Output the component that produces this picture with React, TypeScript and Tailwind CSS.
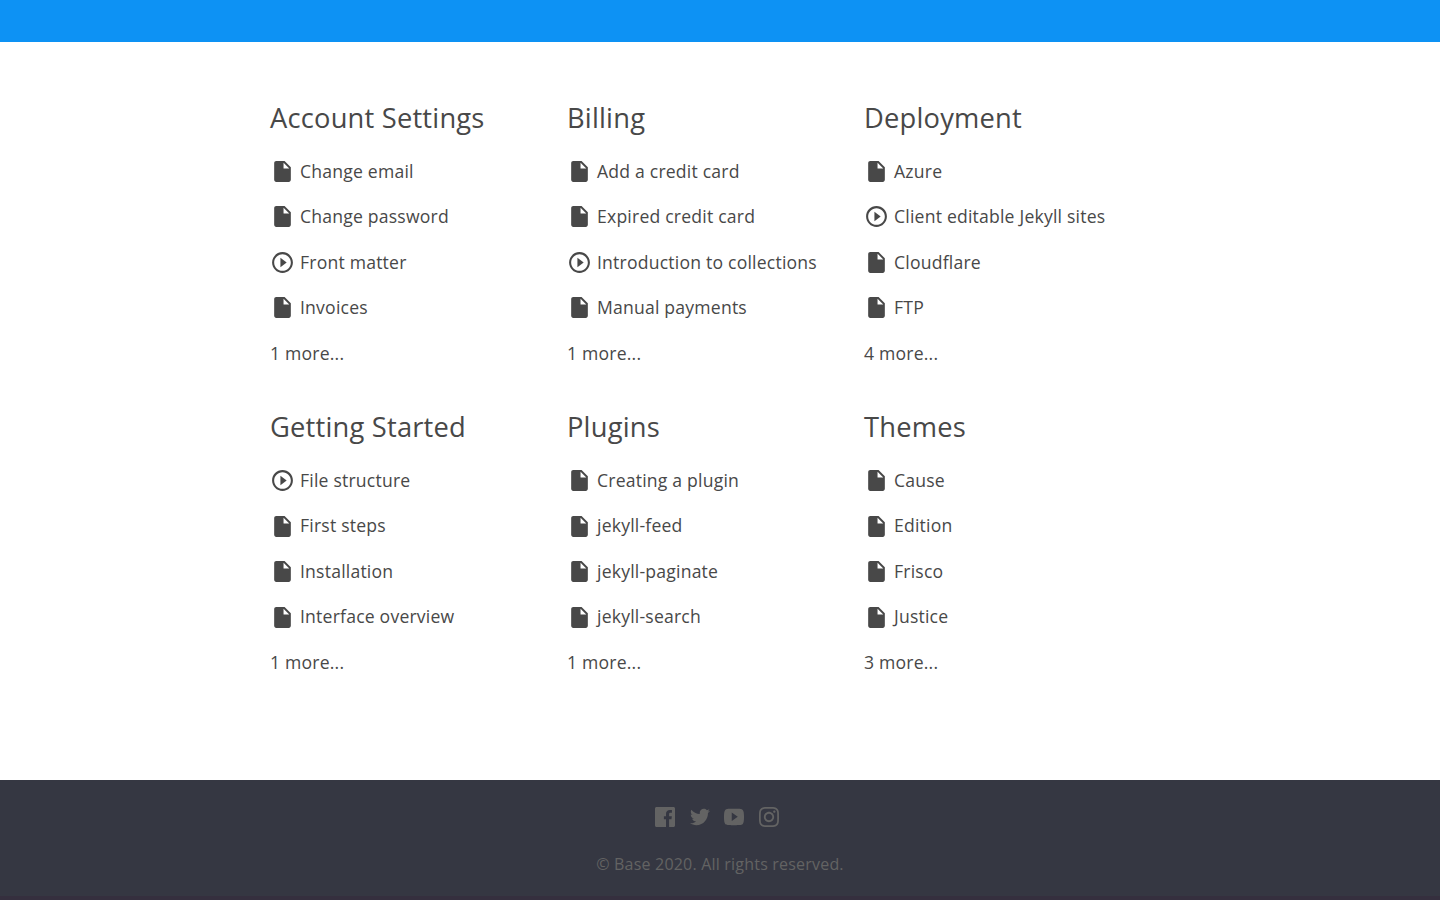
import React from 'react'

type Kind = 'doc' | 'video'

interface Category {
  title: string
  items: { label: string; kind: Kind }[]
  more: number
}

const doc = (label: string) => ({ label, kind: 'doc' as Kind })
const video = (label: string) => ({ label, kind: 'video' as Kind })

const categories: Category[] = [
  {
    title: 'Account Settings',
    items: [doc('Change email'), doc('Change password'), video('Front matter'), doc('Invoices')],
    more: 1,
  },
  {
    title: 'Billing',
    items: [doc('Add a credit card'), doc('Expired credit card'), video('Introduction to collections'), doc('Manual payments')],
    more: 1,
  },
  {
    title: 'Deployment',
    items: [doc('Azure'), video('Client editable Jekyll sites'), doc('Cloudflare'), doc('FTP')],
    more: 4,
  },
  {
    title: 'Getting Started',
    items: [video('File structure'), doc('First steps'), doc('Installation'), doc('Interface overview')],
    more: 1,
  },
  {
    title: 'Plugins',
    items: [doc('Creating a plugin'), doc('jekyll-feed'), doc('jekyll-paginate'), doc('jekyll-search')],
    more: 1,
  },
  {
    title: 'Themes',
    items: [doc('Cause'), doc('Edition'), doc('Frisco'), doc('Justice')],
    more: 3,
  },
]

const iconPaths: Record<Kind, string> = {
  doc: 'M6 2c-1.1 0-1.99.9-1.99 2L4 20c0 1.1.89 2 1.99 2H18c1.1 0 2-.9 2-2V8l-6-6H6zm7 7V3.500L18.500 9H13z',
  video:
    'M10 16.500l6-4.500-6-4.500v9zM12 2C6.480 2 2 6.480 2 12s4.480 10 10 10 10-4.480 10-10S17.520 2 12 2zm0 18c-4.410 0-8-3.590-8-8s3.590-8 8-8 8 3.590 8 8-3.590 8-8 8z',
}

const socials = [
  {
    name: 'Facebook',
    path: 'M22.200 0H1.800C.800 0 0 .800 0 1.800v20.400C0 23.200.800 24 1.800 24h11.400v-9.300h-2.500v-3.600h2.500V8.400c0-3.100 1.900-4.800 4.700-4.800 1.300 0 2.100.1 2.400.140v3.240h-1.600c-1.500 0-1.800.720-1.800 1.770v2.350h3.300l-.460 3.600h-2.840V24h5.300c1 0 1.800-.800 1.800-1.800V1.800C24 .800 23.200 0 22.200 0',
  },
  {
    name: 'Twitter',
    path: 'M23.954 4.569c-.885.389-1.830.654-2.825.775 1.014-.611 1.794-1.574 2.163-2.723-.951.555-2.005.959-3.127 1.184-.896-.959-2.173-1.559-3.591-1.559-2.717 0-4.920 2.203-4.920 4.917 0 .390.045.765.127 1.124C7.691 8.094 4.066 6.130 1.640 3.161c-.427.722-.666 1.561-.666 2.475 0 1.710.870 3.213 2.188 4.096-.807-.026-1.566-.248-2.228-.616v.061c0 2.385 1.693 4.374 3.946 4.827-.413.111-.849.171-1.296.171-.314 0-.615-.030-.916-.086.631 1.953 2.445 3.377 4.604 3.417-1.680 1.319-3.809 2.105-6.102 2.105-.390 0-.779-.023-1.170-.067 2.189 1.394 4.768 2.209 7.557 2.209 9.054 0 13.999-7.496 13.999-13.986 0-.209 0-.420-.015-.630.961-.689 1.800-1.560 2.460-2.548l-.047-.020z',
  },
  {
    name: 'YouTube',
    path: 'M23.600 6.200s-.300-1.900-1.100-2.700c-.900-1-1.900-1-2.400-1.100C17 2.200 12 2.200 12 2.200s-5 0-8.100.200c-.500.100-1.500.100-2.400 1.100C.700 4.300.400 6.200.400 6.200S0 8.600 0 11v2c0 2.400.400 4.800.400 4.800s.300 1.900 1.100 2.700c.900 1 2.100 1 2.600 1.100 1.900.200 7.900.200 7.900.200s5 0 8.100-.200c.500-.100 1.500-.100 2.400-1.100.800-.800 1.100-2.700 1.100-2.700S24 15.400 24 13v-2c0-2.400-.400-4.800-.400-4.800zM9.300 16.900V6.700l7.200 5.100-7.200 5.100z',
  },
  {
    name: 'Instagram',
    path: 'M12 0C8.740 0 8.333.015 7.053.072 5.775.132 4.905.333 4.140.630c-.789.306-1.459.717-2.126 1.384S.935 3.350.630 4.140C.333 4.905.131 5.775.072 7.053.012 8.333 0 8.740 0 12s.015 3.667.072 4.947c.060 1.277.261 2.148.558 2.913.306.788.717 1.459 1.384 2.126.667.666 1.336 1.079 2.126 1.384.766.296 1.636.499 2.913.558C8.333 23.988 8.740 24 12 24s3.667-.015 4.947-.072c1.277-.060 2.148-.262 2.913-.558.788-.306 1.459-.718 2.126-1.384.666-.667 1.079-1.335 1.384-2.126.296-.765.499-1.636.558-2.913.060-1.280.072-1.687.072-4.947s-.015-3.667-.072-4.947c-.060-1.277-.262-2.149-.558-2.913-.306-.789-.718-1.459-1.384-2.126C21.319 1.347 20.651.935 19.860.630c-.765-.297-1.636-.499-2.913-.558C15.667.012 15.260 0 12 0zm0 2.160c3.203 0 3.585.016 4.850.071 1.170.055 1.805.249 2.227.415.562.217.960.477 1.382.896.419.420.679.819.896 1.381.164.422.360 1.057.413 2.227.057 1.266.070 1.646.070 4.850s-.015 3.585-.074 4.850c-.061 1.170-.256 1.805-.421 2.227-.224.562-.479.960-.899 1.382-.419.419-.824.679-1.380.896-.420.164-1.065.360-2.235.413-1.274.057-1.649.070-4.859.070-3.211 0-3.586-.015-4.859-.074-1.171-.061-1.816-.256-2.236-.421-.569-.224-.960-.479-1.379-.899-.421-.419-.690-.824-.900-1.380-.165-.420-.359-1.065-.420-2.235-.045-1.260-.061-1.649-.061-4.844 0-3.196.016-3.586.061-4.861.061-1.170.255-1.814.420-2.234.210-.570.479-.960.900-1.381.419-.419.810-.689 1.379-.898.420-.166 1.051-.361 2.221-.421 1.275-.045 1.650-.060 4.859-.060l.045.030zm0 3.678c-3.405 0-6.162 2.760-6.162 6.162 0 3.405 2.760 6.162 6.162 6.162 3.405 0 6.162-2.760 6.162-6.162 0-3.405-2.760-6.162-6.162-6.162zM12 16c-2.210 0-4-1.790-4-4s1.790-4 4-4 4 1.790 4 4-1.790 4-4 4zm7.846-10.405c0 .795-.646 1.440-1.440 1.440-.795 0-1.440-.646-1.440-1.440 0-.794.646-1.439 1.440-1.439.793-.001 1.440.645 1.440 1.439z',
  },
]

function CategoryList({ category }: { category: Category }) {
  return (
    <section className="h-[309.100px]">
      <h3 className="text-[27.300px] leading-[40px]">{category.title}</h3>
      <ul className="mt-[10.100px] text-[17.600px] leading-7">
        {category.items.map((item) => (
          <li key={item.label} className="flex h-[45.500px] items-center whitespace-nowrap">
            <a href="#" className="flex items-center">
              <svg viewBox="0 0 24 24" className="mt-[1.200px] mr-[5px] h-[25px] w-[25px] fill-[#484848]">
                <path d={iconPaths[item.kind]} />
              </svg>
              {item.label}
            </a>
          </li>
        ))}
        <li className="flex h-[45.500px] items-center">
          <a href="#">{category.more} more...</a>
        </li>
      </ul>
    </section>
  )
}

export default function App() {
  return (
    <div className="flex h-[900px] flex-col overflow-hidden bg-white font-['Open_Sans',sans-serif] tracking-[0.200px] text-[#484848]">
      <header className="h-[42px] shrink-0 bg-[#0d92f4]" />
      <main className="h-[738px] shrink-0 pt-[56px] pl-[270px]">
        <div className="grid grid-cols-[297px_297px_297px]">
          {categories.map((category) => (
            <CategoryList key={category.title} category={category} />
          ))}
        </div>
      </main>
      <footer className="flex h-[116px] shrink-0 flex-col items-center bg-[#353742] pt-[27px] text-[#636363]">
        <div className="mr-[6px] flex gap-[14.500px]">
          {socials.map((social) => (
            <a key={social.name} href="#" aria-label={social.name}>
              <svg viewBox="0 0 24 24" className="h-5 w-5 fill-current">
                <path d={social.path} />
              </svg>
            </a>
          ))}
        </div>
        <p className="mt-[25px] text-base leading-6">© Base 2020. All rights reserved.</p>
      </footer>
      <div className="h-1 shrink-0 bg-[#352f3e]" />
    </div>
  )
}
